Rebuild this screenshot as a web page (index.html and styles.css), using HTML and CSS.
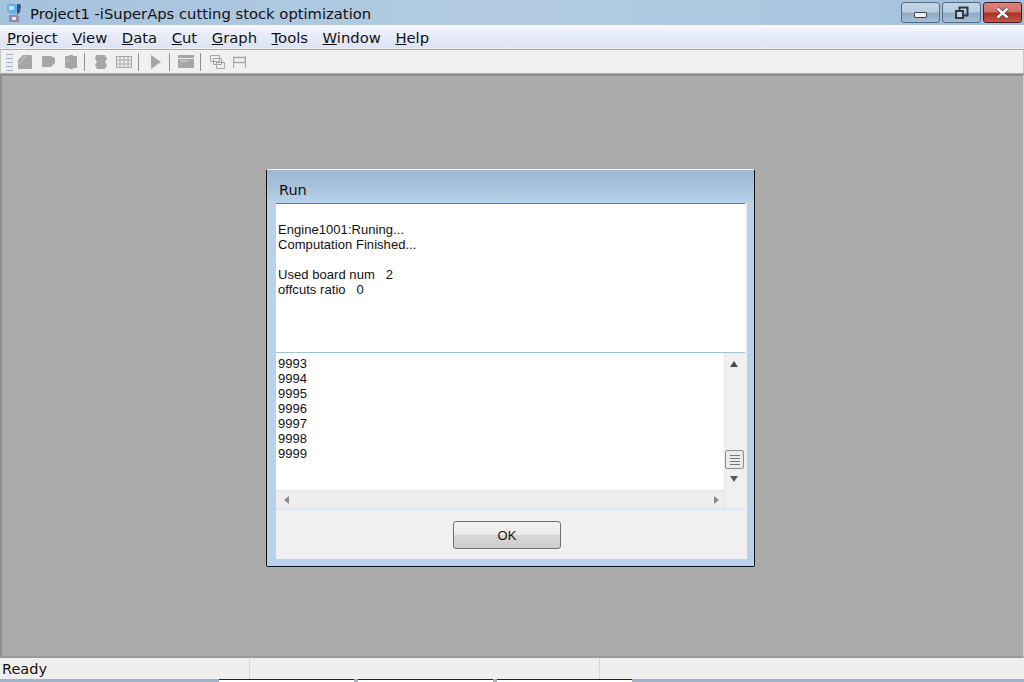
FILE: index.html
```html
<!DOCTYPE html>
<html lang="en">
<head>
<meta charset="utf-8">
<title>Project1 -iSuperAps cutting stock optimization</title>
<link rel="stylesheet" href="styles.css">
</head>
<body>
<div class="app">
  <header class="titlebar">
    <svg class="appicon" width="14" height="18" viewBox="0 0 14 18"><path d="M0 2l3-2h5l2 2v5l-2 3H4L2 8 0 6z" fill="#5ab0f0"/><path d="M2 2h5v4H2z" fill="#bfe6fc"/><path d="M10 0h3l1 2-1 6-3 3z" fill="#3d4c80"/><path d="M3 11h7l2 1v6H2v-6z" fill="#8c8ca6"/><path d="M5 13h4v3H5z" fill="#e6e6f0"/></svg>
    <div class="title">Project1 -iSuperAps cutting stock optimization</div>
    <div class="winbtns">
      <div class="winbtn"><span class="min-glyph"></span></div>
      <div class="winbtn"><svg width="16" height="14" viewBox="0 0 16 14"><path d="M5.500 4V1.500h8v8H10" fill="none" stroke="#2f3b48" stroke-width="2"/><rect x="2" y="5" width="7" height="7" fill="#c4d4e2" stroke="#2f3b48" stroke-width="2"/></svg></div>
      <div class="winbtn close"><svg width="15" height="12" viewBox="0 0 15 12"><path d="M2.500 1.500l10 9m0-9l-10 9" stroke="#3a3a3a" stroke-width="4"/><path d="M2.500 1.500l10 9m0-9l-10 9" stroke="#f4f4f4" stroke-width="2.600"/></svg></div>
    </div>
  </header>
  <nav class="menubar">
    <span class="menu"><u>P</u>roject</span>
    <span class="menu"><u>V</u>iew</span>
    <span class="menu"><u>D</u>ata</span>
    <span class="menu"><u>C</u>ut</span>
    <span class="menu"><u>G</u>raph</span>
    <span class="menu"><u>T</u>ools</span>
    <span class="menu"><u>W</u>indow</span>
    <span class="menu"><u>H</u>elp</span>
  </nav>
  <div class="toolbar">
    <div class="grip"></div>
    <svg class="tool" width="14" height="14" viewBox="0 0 14 14"><path d="M5 0h8l1 1v13H0V5z" fill="#a6a6a6"/><path d="M1 9l7-8" stroke="#d4d4d4"/></svg>
    <svg class="tool" width="14" height="14" viewBox="0 0 14 14"><path d="M1 1h9l4 2v5l-4 4H1z" fill="#a6a6a6"/></svg>
    <svg class="tool" width="14" height="14" viewBox="0 0 14 14"><path d="M1 1h4V0h4v1h4v12H9v1H5v-1H1z" fill="#a6a6a6"/><path d="M4 5v2" stroke="#d0d0d0"/></svg>
    <span class="sep"></span>
    <svg class="tool bump" width="12" height="14" viewBox="0 0 12 14"><path d="M1 0h9l2 4-2 3 2 3-2 4H2L0 10l2-3-2-3z" fill="#a6a6a6"/></svg>
    <svg class="tool" width="16" height="12" viewBox="0 0 16 12"><path d="M.5.500h15v11H.5zM.5 4h15M.5 8h15M4 .5v11M8 .5v11M12 .5v11" fill="none" stroke="#a6a6a6"/></svg>
    <span class="sep"></span>
    <svg class="tool play" width="10" height="14" viewBox="0 0 10 14"><path d="M0 0l10 7-10 7z" fill="#a6a6a6"/></svg>
    <span class="sep"></span>
    <svg class="tool" width="16" height="13" viewBox="0 0 16 13"><path d="M0 0h16v3H0zM0 4h16v9H0z" fill="#a6a6a6"/><path d="M2 6h8" stroke="#dcdcdc"/></svg>
    <span class="sep"></span>
    <svg class="tool nudge" width="15" height="14" viewBox="0 0 15 14"><path d="M.5.500h9v6h-9zM3.500 3.500h8v6h-8zM6.500 7.500h8v6h-8z" fill="#eeeeee" stroke="#a6a6a6"/></svg>
    <svg class="tool" width="13" height="12" viewBox="0 0 13 12"><path d="M.5.500v11M12.500.500v11M.5 1.500h12M.5 6.500h12" fill="none" stroke="#a6a6a6" stroke-width="1.300"/></svg>
  </div>
  <main class="workspace">
    <section class="dialog">
      <div class="dlg-title">Run</div>
      <div class="dlg-body">
        <div class="log">
          <div class="log-line">&nbsp;</div>
          <div class="log-line">Engine1001:Runing...</div>
          <div class="log-line">Computation Finished...</div>
          <div class="log-line">&nbsp;</div>
          <div class="log-line">Used board num&nbsp;&nbsp; 2</div>
          <div class="log-line">offcuts ratio&nbsp;&nbsp; 0</div>
        </div>
        <div class="listbox">
          <div class="list-main">
            <div class="list-text">
              <div class="log-line">9993</div>
              <div class="log-line">9994</div>
              <div class="log-line">9995</div>
              <div class="log-line">9996</div>
              <div class="log-line">9997</div>
              <div class="log-line">9998</div>
              <div class="log-line">9999</div>
            </div>
            <div class="vscroll">
              <span class="arrow up"></span>
              <div class="vspace"></div>
              <div class="thumb"><i></i><i></i><i></i><i></i></div>
              <span class="arrow down"></span>
            </div>
          </div>
          <div class="hrow">
            <div class="hscroll">
              <span class="arrow left"></span>
              <span class="arrow right"></span>
            </div>
            <div class="corner"></div>
          </div>
        </div>
        <div class="dlg-foot"><button class="okbtn" type="button">OK</button></div>
      </div>
    </section>
  </main>
  <footer class="statusbar">
    <div class="pane first">Ready</div>
    <div class="pane second"></div>
    <div class="pane third"></div>
  </footer>
  <div class="taskstrip">
    <span class="task"></span>
    <span class="task"></span>
    <span class="task"></span>
  </div>
</div>
</body>
</html>
```
FILE: styles.css
```css
* { box-sizing: border-box; }
html, body { margin: 0; padding: 0; }
body { width: 1024px; height: 682px; overflow: hidden; font-family: "Liberation Sans", Arial, sans-serif; color: #000; }
.app { width: 1024px; height: 682px; display: flex; flex-direction: column; background: #f0f0f0; }

.titlebar { height: 25px; display: flex; align-items: center; padding-left: 7px; background: linear-gradient(90deg, #a6c2dc 0%, #b3cce3 50%, #a9c5df 85%, #9fbdd9 100%); }
.appicon { flex: none; margin-right: 9px; margin-top: 1px; }
.title { flex: 1; font-family: "DejaVu Sans", sans-serif; font-size: 14.750px; color: #111; white-space: nowrap; padding-top: 1px; }
.winbtns { display: flex; gap: 2px; align-self: flex-start; margin-top: 2px; margin-right: 2px; }
.winbtn { width: 39px; height: 21px; border: 1px solid #55697f; border-radius: 3px; display: flex; align-items: center; justify-content: center; background: linear-gradient(180deg, #c3d6e6 0%, #b7cde0 48%, #8facc6 52%, #a4bed5 100%); }
.winbtn.close { border-color: #4d1a1f; background: linear-gradient(180deg, #d8837c 0%, #cf6f66 48%, #ae2d20 52%, #c2584c 100%); }
.min-glyph { width: 13px; height: 6px; margin-top: 5px; background: #eef2f6; border: 1px solid #38434f; border-radius: 1px; }

.menubar { height: 23px; display: flex; align-items: center; gap: 14.500px; padding: 1px 0 0 7px; font-family: "DejaVu Sans", sans-serif; font-size: 14.800px; color: #111; background: linear-gradient(180deg, #f8fafe 0%, #e9edf9 35%, #dde3f3 100%); }
.menu { white-space: nowrap; }

.toolbar { height: 25px; margin-top: 1px; border-top: 1px solid #a9a9a9; border-bottom: 1px solid #a9a9a9; border-left: 1px solid #c4c4c4; border-right: 1px solid #c4c4c4; background: #f0f0f0; display: flex; align-items: center; padding-left: 2px; }
.grip { width: 7px; height: 22px; margin: 0 5px 0 3px; background: repeating-linear-gradient(180deg, #e6ebf6 0 3px, #aab2c6 3px 4px); }
.tool { flex: none; margin-right: 9px; }
.tool.bump { margin-left: 2px; }
.tool.play { margin: 0 11px 0 4px; }
.tool.nudge { margin-left: 1px; margin-right: 8px; }
.sep { flex: none; width: 1px; height: 18px; background: #8f8f8f; margin: 0 8px 0 -3px; }

.workspace { position: relative; flex: 1; background: #ababab; border-top: 2px solid #8e8e8e; border-left: 2px solid #8e8e8e; border-bottom: 2px solid #9a9a9a; border-right: 1px solid #d0d0d0; }
.dialog { position: absolute; left: 264px; top: 93px; width: 489px; height: 398px; display: flex; flex-direction: column; border: 1px solid #111; border-top-color: #f2f2f2; border-radius: 2px; background: #b9d1ea; }
.dlg-title { height: 33px; padding: 12px 0 0 12px; font-family: "DejaVu Sans", sans-serif; font-size: 14.500px; color: #111; background: linear-gradient(180deg, #9db8d4 0%, #a8c2dd 50%, #b9d1ea 100%); }
.dlg-body { flex: 1; display: flex; flex-direction: column; margin: 0 7px 7px 9px; background: #f0f0f0; }
.log { height: 150px; margin-right: 2px; background: #fff; border-top: 1px solid #3f86b8; border-bottom: 1px solid #9cc4dd; padding: 3px 0 0 2px; }
.log-line { height: 15px; font-size: 13px; line-height: 15px; letter-spacing: 0.050px; color: #111; white-space: nowrap; }
.listbox { height: 157px; margin-right: 2px; display: flex; flex-direction: column; background: #fff; border-bottom: 2px solid #dfe8f2; }
.list-main { flex: 1; display: flex; min-height: 0; }
.list-text { flex: 1; padding: 3px 0 0 2px; }
.vscroll { width: 21px; display: flex; flex-direction: column; align-items: flex-start; background: #f0f0f0; border-left: 1px solid #ececec; }
.vspace { flex: 1; }
.thumb { flex: none; width: 19px; height: 19px; display: flex; flex-direction: column; align-items: center; justify-content: center; gap: 2px; background: #ebebeb; border: 1px solid #8c8c8c; border-radius: 2px; }
.thumb i { display: block; width: 10px; height: 1px; background: #777; }
.arrow { flex: none; width: 0; height: 0; display: block; }
.arrow.up { margin: 8px 0 0 5px; border-left: 4px solid transparent; border-right: 4px solid transparent; border-bottom: 6px solid #4a4a4a; }
.arrow.down { margin: 7px 0 8px 5px; border-left: 4px solid transparent; border-right: 4px solid transparent; border-top: 6px solid #5c5c5c; }
.hrow { flex: none; height: 18px; display: flex; }
.hscroll { flex: 1; display: flex; justify-content: space-between; align-items: center; padding: 0 5px 0 8px; background: #eeeeee; border-top: 1px solid #e6e6e6; }
.arrow.left { border-top: 4px solid transparent; border-bottom: 4px solid transparent; border-right: 5px solid #8a8a8a; }
.arrow.right { border-top: 4px solid transparent; border-bottom: 4px solid transparent; border-left: 5px solid #8a8a8a; }
.corner { width: 21px; background: #f0f0f0; border-left: 1px solid #e6e6e6; }
.dlg-foot { flex: 1; display: flex; justify-content: center; align-items: flex-start; padding: 11px 9px 0 0; background: #f0f0f0; }
.okbtn { width: 108px; height: 28px; padding: 0; border: 1px solid #707070; border-radius: 3px; font-family: "Liberation Sans", sans-serif; font-size: 13px; color: #111; background: linear-gradient(180deg, #f2f2f2 0%, #ebebeb 48%, #d6d6d6 52%, #cfcfcf 100%); }

.statusbar { height: 21px; display: flex; background: #f1efed; }
.pane { height: 100%; border-right: 1px solid #d9d7d5; font-family: "DejaVu Sans", sans-serif; font-size: 14.500px; line-height: 23px; padding-left: 2px; color: #111; }
.pane.first { width: 250px; }
.pane.second { width: 350px; }
.pane.third { flex: 1; border-right: none; }

.taskstrip { height: 3px; display: flex; gap: 4px; background: #9db4c9; padding-left: 219px; }
.task { display: block; width: 135px; height: 3px; background: #fff; border-top: 1px solid #222; }
```
